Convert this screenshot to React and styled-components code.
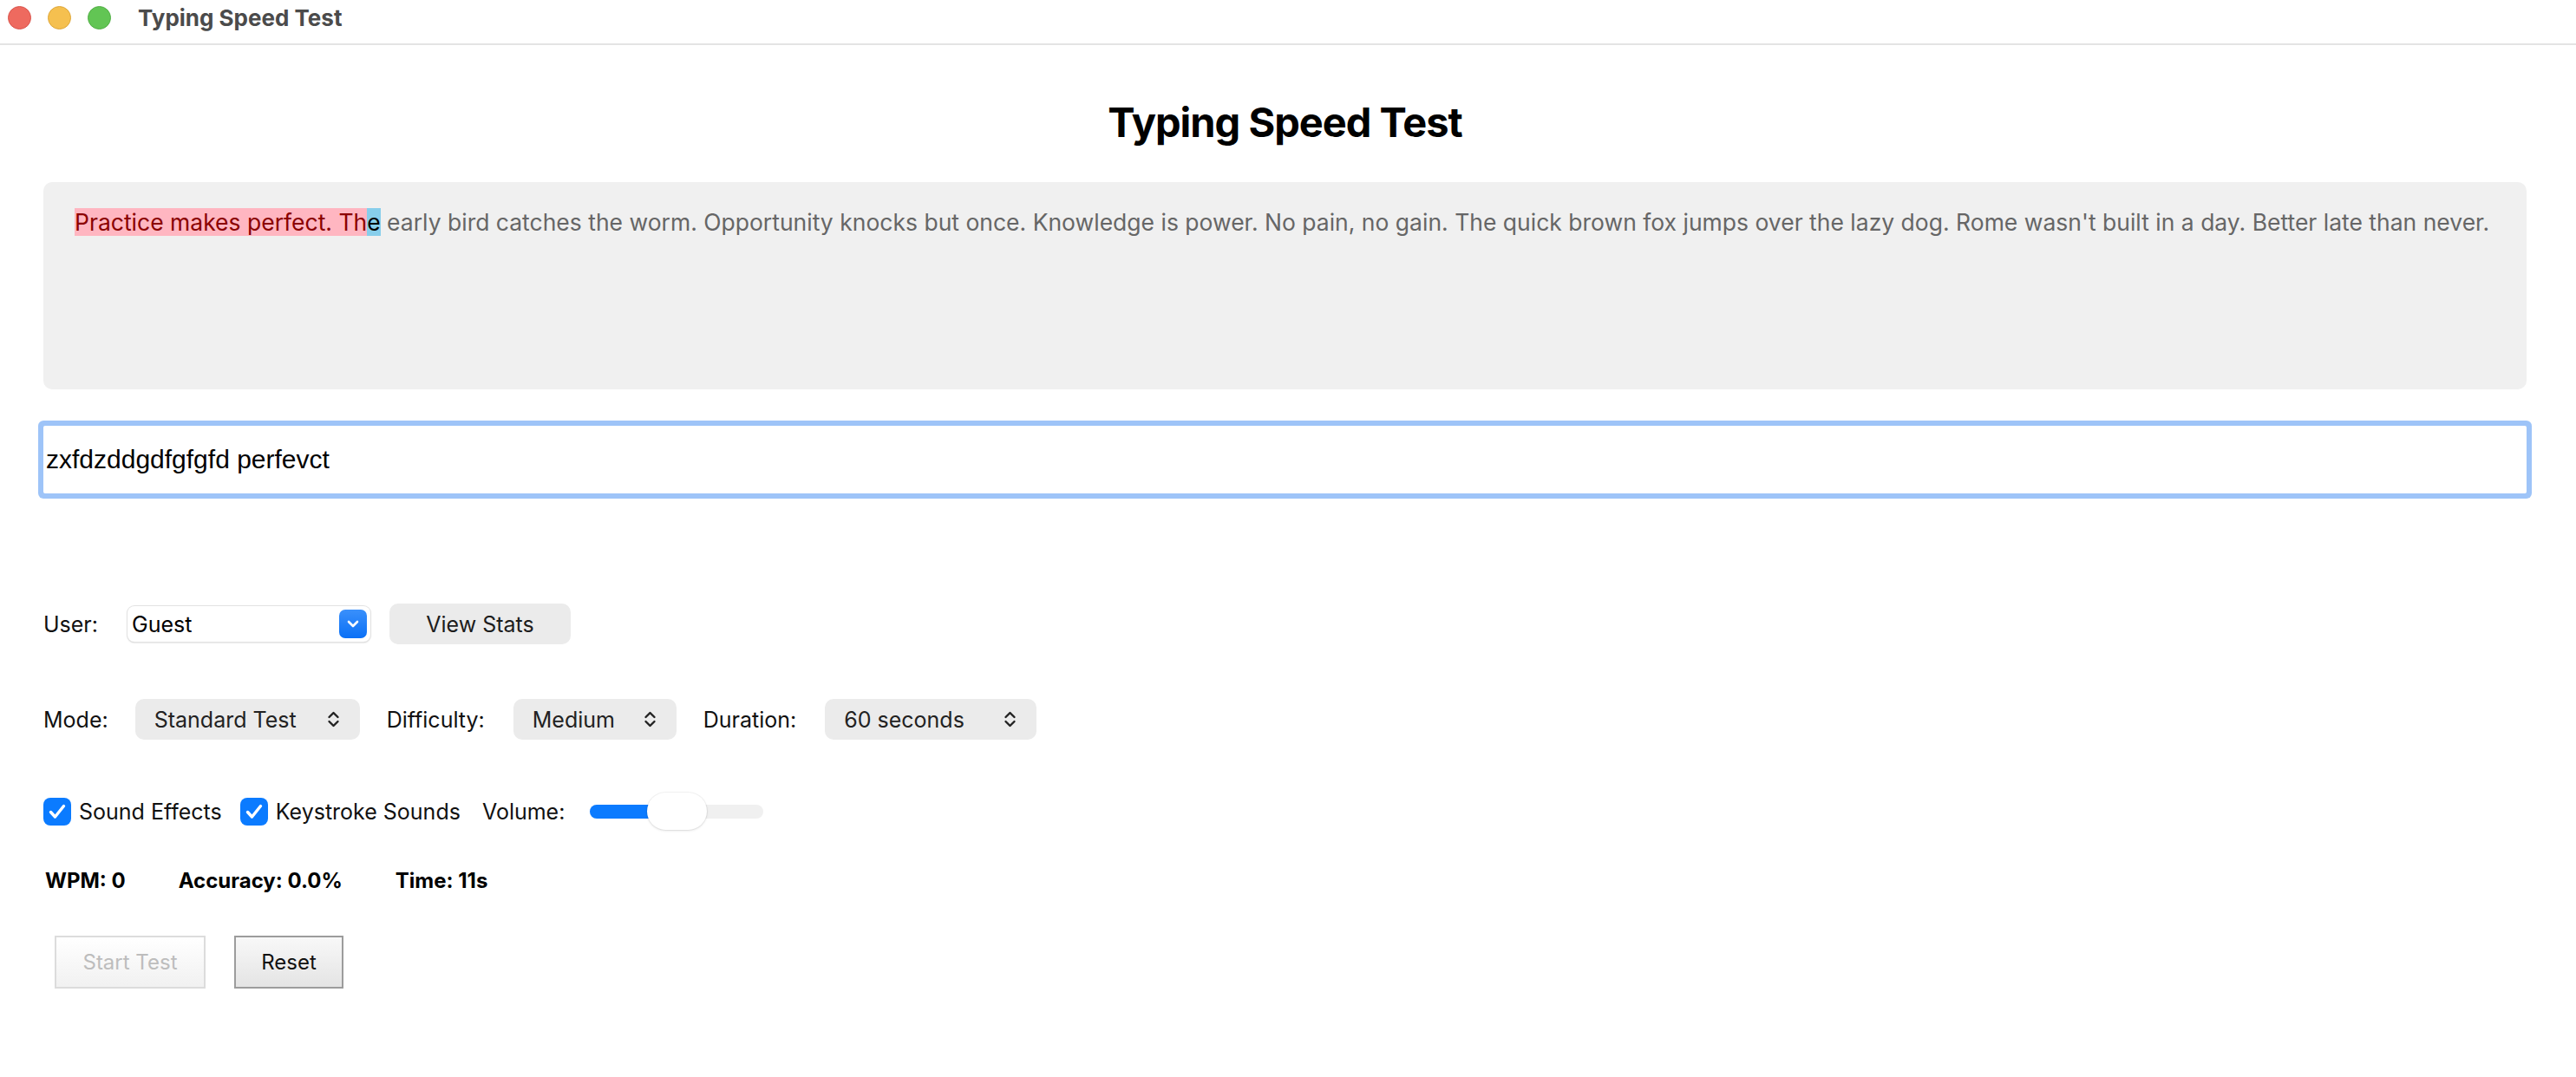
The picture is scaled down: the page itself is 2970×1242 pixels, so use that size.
import React from 'react'
import styled, { createGlobalStyle } from 'styled-components'

const GlobalStyle = createGlobalStyle`
  html, body {
    margin: 0;
    padding: 0;
    background: #fff;
  }

  body {
    font-family: Inter, "Liberation Sans", sans-serif;
    color: #111;
  }

  * {
    box-sizing: border-box;
  }
`

const Window = styled.div`
  width: 2970px;
  min-height: 1242px;
  background: #fff;
  display: flex;
  flex-direction: column;
`

const TitleBar = styled.div`
  height: 52px;
  display: flex;
  align-items: center;
  gap: 19px;
  padding: 0 0 10px 9px;
  border-bottom: 2px solid #e4e4e4;
`

const Light = styled.span`
  width: 27px;
  height: 27px;
  border-radius: 50%;
  background: ${({ $color }) => $color};
  border: 1px solid ${({ $edge }) => $edge};
`

const WindowTitle = styled.span`
  margin-left: 12px;
  font-size: 26px;
  font-weight: 700;
  color: #4b4b4b;
`

const Main = styled.main`
  padding: 60px 57px 40px 50px;
  display: flex;
  flex-direction: column;
`

const Heading = styled.h1`
  margin: 0;
  text-align: center;
  font-size: 47px;
  line-height: 58px;
  font-weight: 700;
  letter-spacing: -1px;
  color: #000;
`

const QuoteBox = styled.div`
  margin-top: 40px;
  height: 239px;
  padding: 29px 36px;
  background: #f0f0f0;
  border-radius: 10px;
  font-size: 26.5px;
  line-height: 34px;
  color: #666;
  white-space: nowrap;
`

const Typed = styled.span`
  background: ${({ $correct }) => ($correct ? '#c8f0c8' : '#ffb6c1')};
  color: ${({ $correct }) => ($correct ? '#006400' : '#8b0000')};
`

const Current = styled.span`
  background: #87ceeb;
  color: #000;
`

const TypingInput = styled.input`
  margin-top: 42px;
  width: 100%;
  height: 78px;
  padding: 0 3px;
  border: none;
  border-radius: 2px;
  box-shadow: 0 0 0 6px #9ec4f8;
  outline: none;
  font-family: "Liberation Sans", Arial, sans-serif;
  font-size: 30px;
  color: #000;
  background: #fff;
`

const Row = styled.div`
  display: flex;
  align-items: center;
  height: ${({ $height }) => $height}px;
  margin-top: ${({ $top }) => $top}px;
`

const Label = styled.span`
  font-size: 25px;
  color: #111;
  margin-right: ${({ $gap }) => $gap}px;
`

const UserSelect = styled.div`
  width: 280px;
  height: 41px;
  display: flex;
  align-items: center;
  justify-content: space-between;
  padding: 0 4px 0 5px;
  background: #fff;
  border-radius: 8px;
  box-shadow: 0 0 0 1px #e2e2e2, 0 1px 2px rgba(0, 0, 0, 0.25);
  font-size: 25px;
  color: #000;
`

const SelectKnob = styled.span`
  width: 32px;
  height: 33px;
  border-radius: 7px;
  background: linear-gradient(#3a90fb, #0a70f6);
  display: flex;
  align-items: center;
  justify-content: center;
`

const GrayButton = styled.button`
  height: 47px;
  width: ${({ $width }) => $width}px;
  margin-left: ${({ $left }) => $left || 0}px;
  border: none;
  border-radius: 10px;
  background: #ebebeb;
  font-family: inherit;
  font-size: 25px;
  color: #1d1d1d;
  padding: 0;
`

const PopupSelect = styled.div`
  height: 47px;
  width: ${({ $width }) => $width}px;
  margin-right: ${({ $gap }) => $gap || 0}px;
  display: flex;
  align-items: center;
  justify-content: space-between;
  padding: 0 23px 0 22px;
  border-radius: 10px;
  background: #ebebeb;
  font-size: 25px;
  color: #222;
`

const CheckBox = styled.span`
  width: 32px;
  height: 32px;
  border-radius: 8px;
  background: #0b7bff;
  display: flex;
  align-items: center;
  justify-content: center;
  margin-right: 9px;
`

const Slider = styled.div`
  position: relative;
  width: 200px;
  height: 43px;
  display: flex;
  align-items: center;
`

const Track = styled.div`
  width: 100%;
  height: 16px;
  border-radius: 8px;
  background: #f0f0f0;
  overflow: hidden;
`

const Fill = styled.div`
  height: 100%;
  background: #0b7bff;
`

const Thumb = styled.div`
  position: absolute;
  top: 0;
  width: 69px;
  height: 43px;
  border-radius: 22px;
  background: #fff;
  box-shadow: 0 0 0 1px rgba(0, 0, 0, 0.04), 0 1px 3px rgba(0, 0, 0, 0.12);
`

const Stats = styled.div`
  margin-top: 44px;
  display: flex;
  gap: 61px;
  padding-left: 2px;
  font-size: 24px;
  line-height: 29px;
  font-weight: 700;
  color: #000;
`

const ActionBar = styled.div`
  margin-top: 49px;
  margin-left: 13px;
  display: flex;
  gap: 33px;
`

const ActionButton = styled.button`
  height: 61px;
  width: ${({ $width }) => $width}px;
  padding: 0;
  font-family: inherit;
  font-size: 24px;
  border: 2px solid ${({ disabled }) => (disabled ? '#dcdcdc' : '#9c9c9c')};
  background: ${({ disabled }) =>
    disabled ? 'linear-gradient(#ffffff, #f1f1f1)' : 'linear-gradient(#f8f8f8, #e4e4e4)'};
  color: ${({ disabled }) => (disabled ? '#bdbdbd' : '#111')};
`

const ChevronDown = () => (
  <svg width="14" height="9" viewBox="0 0 14 9">
    <path d="M2 2 L7 7 L12 2" fill="none" stroke="#fff" strokeWidth="2.6" strokeLinecap="round" strokeLinejoin="round" />
  </svg>
)

const UpDown = () => (
  <svg width="15" height="21" viewBox="0 0 15 21">
    <path d="M2.5 8 L7.5 3 L12.5 8 M2.5 13 L7.5 18 L12.5 13" fill="none" stroke="#222" strokeWidth="2.4" strokeLinecap="round" strokeLinejoin="round" />
  </svg>
)

const Check = () => (
  <svg width="22" height="20" viewBox="0 0 22 20">
    <path d="M3.5 10.5 L8.5 16 L18.5 3.5" fill="none" stroke="#fff" strokeWidth="3.4" strokeLinecap="round" strokeLinejoin="round" />
  </svg>
)

const QUOTE =
  "Practice makes perfect. The early bird catches the worm. Opportunity knocks but once. Knowledge is power. No pain, no gain. The quick brown fox jumps over the lazy dog. Rome wasn't built in a day. Better late than never."

const App = () => {
  const position = 26
  const volume = 0.5
  const thumbLeft = volume * (200 - 69)

  return (
    <Window>
      <GlobalStyle />
      <TitleBar>
        <Light $color="#ee6a5f" $edge="#d9534b" />
        <Light $color="#f5c04f" $edge="#dea637" />
        <Light $color="#62c554" $edge="#4fae43" />
        <WindowTitle>Typing Speed Test</WindowTitle>
      </TitleBar>

      <Main>
        <Heading>Typing Speed Test</Heading>

        <QuoteBox>
          <Typed>{QUOTE.slice(0, position)}</Typed>
          <Current>{QUOTE[position]}</Current>
          {QUOTE.slice(position + 1)}
        </QuoteBox>

        <TypingInput defaultValue="zxfdzddgdfgfgfd perfevct" />

        <Row $height={47} $top={127}>
          <Label $gap={34}>User:</Label>
          <UserSelect>
            Guest
            <SelectKnob><ChevronDown /></SelectKnob>
          </UserSelect>
          <GrayButton $width={209} $left={22}>View Stats</GrayButton>
        </Row>

        <Row $height={47} $top={63}>
          <Label $gap={31}>Mode:</Label>
          <PopupSelect $width={259} $gap={31}>Standard Test<UpDown /></PopupSelect>
          <Label $gap={33}>Difficulty:</Label>
          <PopupSelect $width={188} $gap={31}>Medium<UpDown /></PopupSelect>
          <Label $gap={33}>Duration:</Label>
          <PopupSelect $width={244}>60 seconds<UpDown /></PopupSelect>
        </Row>

        <Row $height={43} $top={61}>
          <CheckBox><Check /></CheckBox>
          <Label $gap={21}>Sound Effects</Label>
          <CheckBox><Check /></CheckBox>
          <Label $gap={25}>Keystroke Sounds</Label>
          <Label $gap={29}>Volume:</Label>
          <Slider>
            <Track>
              <Fill style={{ width: thumbLeft + 2 }} />
            </Track>
            <Thumb style={{ left: thumbLeft }} />
          </Slider>
        </Row>

        <Stats>
          <span>WPM: 0</span>
          <span>Accuracy: 0.0%</span>
          <span>Time: 11s</span>
        </Stats>

        <ActionBar>
          <ActionButton $width={174} disabled>Start Test</ActionButton>
          <ActionButton $width={126}>Reset</ActionButton>
        </ActionBar>
      </Main>
    </Window>
  )
}

export default App
